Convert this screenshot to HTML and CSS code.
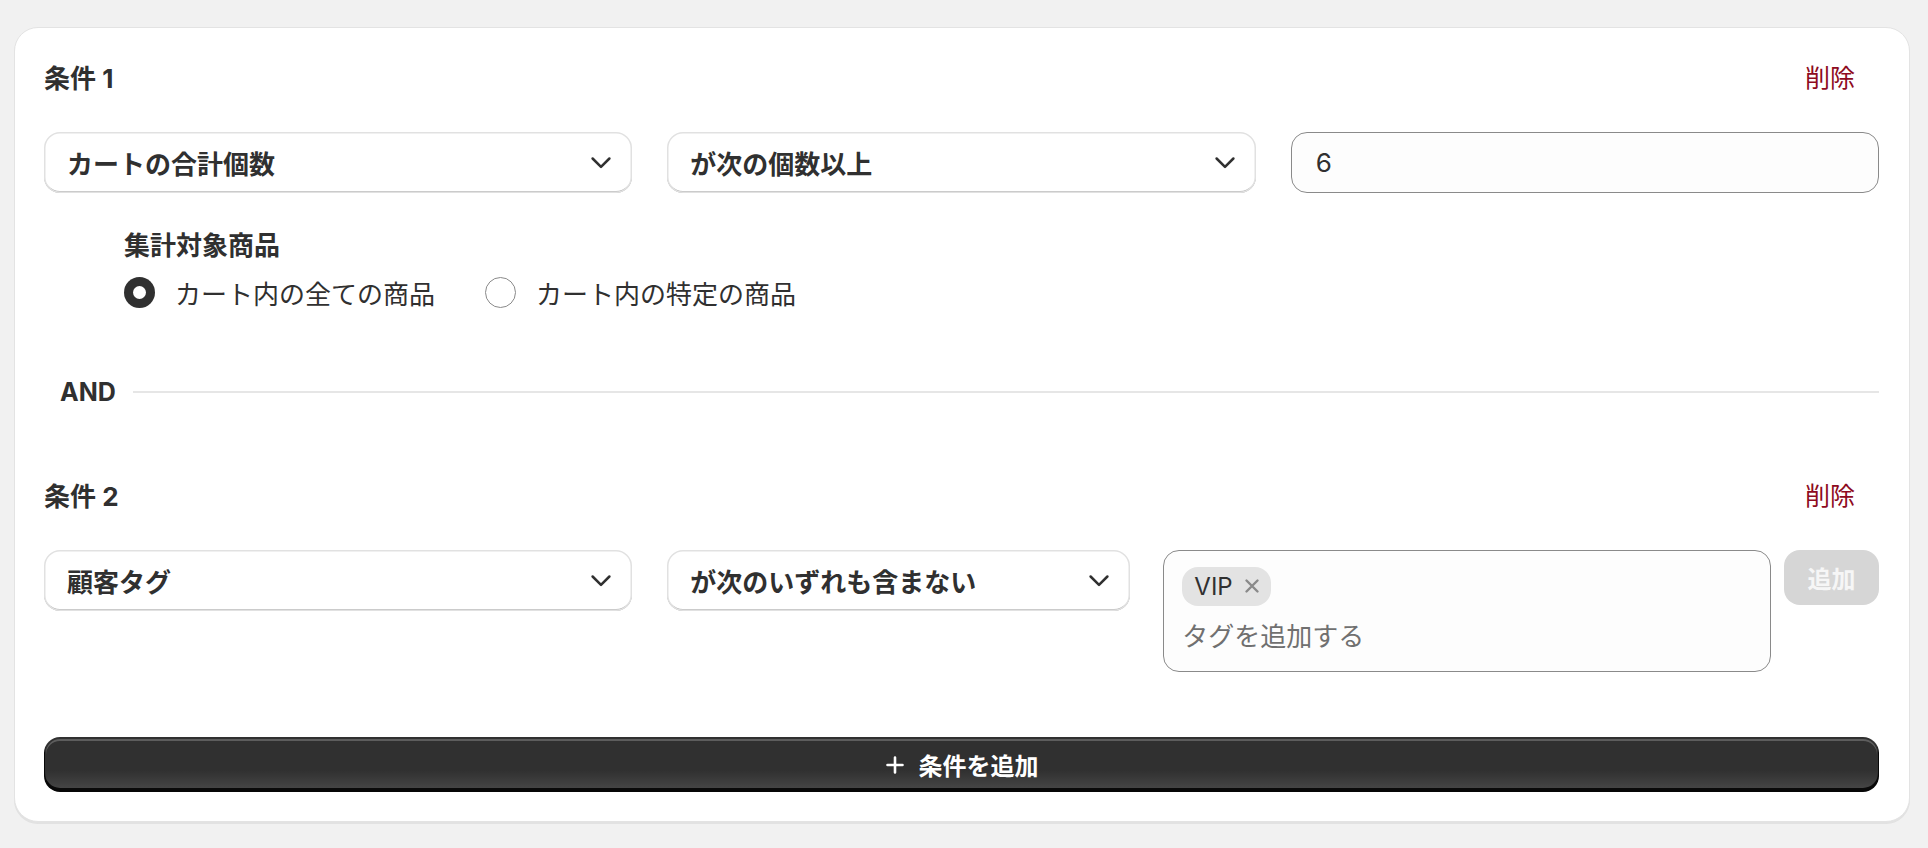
FILE: index.html
```html
<!DOCTYPE html>
<html lang="ja">
<head>
<meta charset="utf-8">
<link rel="stylesheet" href="styles.css">
</head>
<body>
<div class="card">
  <section class="cond">
    <div class="cond-head">
      <h2 class="cond-title">条件 1</h2>
      <span class="delete">削除</span>
    </div>
    <div class="row">
      <div class="select"><span>カートの合計個数</span><svg class="chev" viewBox="0 0 20 20"><path d="M4 7.5l6 6 6-6"/></svg></div>
      <div class="select"><span>が次の個数以上</span><svg class="chev" viewBox="0 0 20 20"><path d="M4 7.5l6 6 6-6"/></svg></div>
      <div class="input"><span>6</span></div>
    </div>
    <div class="scope">
      <div class="scope-title">集計対象商品</div>
      <div class="radios">
        <label class="radio-opt"><span class="radio checked"></span><span>カート内の全ての商品</span></label>
        <label class="radio-opt"><span class="radio"></span><span>カート内の特定の商品</span></label>
      </div>
    </div>
  </section>

  <div class="and-row">
    <span class="and">AND</span>
    <span class="and-line"></span>
  </div>

  <section class="cond">
    <div class="cond-head">
      <h2 class="cond-title">条件 2</h2>
      <span class="delete">削除</span>
    </div>
    <div class="row">
      <div class="select"><span>顧客タグ</span><svg class="chev" viewBox="0 0 20 20"><path d="M4 7.5l6 6 6-6"/></svg></div>
      <div class="row-right">
        <div class="select select-op"><span>が次のいずれも含まない</span><svg class="chev" viewBox="0 0 20 20"><path d="M4 7.5l6 6 6-6"/></svg></div>
        <div class="tagbox">
          <div class="chips"><span class="chip">VIP<svg class="chip-x" viewBox="0 0 20 20"><path d="M5 5l10 10M15 5 5 15"/></svg></span></div>
          <div class="placeholder">タグを追加する</div>
        </div>
        <div class="btn-add">追加</div>
      </div>
    </div>
  </section>

  <div class="btn-primary">
    <svg class="plus" viewBox="0 0 20 20"><path d="M10 2.5v15M2.5 10h15"/></svg>
    <span>条件を追加</span>
  </div>
</div>
</body>
</html>
```

FILE: styles.css
```css
* { box-sizing: border-box; }
html, body { margin: 0; }
body {
  background: #f1f1f1;
  padding: 27px 18px 26px 14px;
  font-family: "Inter", "Noto Sans CJK JP", sans-serif;
  color: #303030;
}
.card {
  background: #fff;
  border: 1px solid #e3e3e3;
  border-radius: 24px;
  box-shadow: 0 2px 0 0 rgba(26,26,26,0.07);
  padding: 29.5px 30px 29px 29px;
}
.cond-head {
  display: flex;
  align-items: center;
  justify-content: space-between;
  height: 40px;
  padding-bottom: 3px;
}
.cond-title {
  margin: 0;
  font-size: 26px;
  font-weight: 700;
}
.delete {
  font-size: 25px;
  color: #8e0b21;
  margin-right: 24px;
}
.row {
  margin-top: 34px;
  display: grid;
  grid-template-columns: repeat(3, 1fr);
  gap: 35px;
  align-items: start;
}
.row-right {
  grid-column: span 2;
  display: flex;
  align-items: flex-start;
}
.select {
  height: 61px;
  border-radius: 16px;
  background: #fff;
  box-shadow: inset 0 0 0 1.5px #e1e1e1, inset 0 -2px 0 0 #b5b5b5;
  display: flex;
  align-items: center;
  justify-content: space-between;
  padding: 0 17px 0 23px;
  font-size: 26px;
  font-weight: 600;
}
.chev {
  width: 28px;
  height: 28px;
  flex: none;
  fill: none;
  stroke: #303030;
  stroke-width: 1.8;
  stroke-linecap: round;
  stroke-linejoin: round;
}
.select-op { width: 463px; flex: none; margin-right: 33px; }
.input {
  height: 61px;
  border: 1px solid #8a8a8a;
  border-radius: 16px;
  background: #fdfdfd;
  display: flex;
  align-items: center;
  padding-left: 24px;
  font-size: 26px;
}
.scope {
  margin: 35px 0 0 80px;
}
.scope-title {
  height: 36px;
  line-height: 36px;
  font-size: 26px;
  font-weight: 700;
}
.radios {
  margin-top: 11px;
  display: flex;
  gap: 50px;
}
.radio-opt {
  display: flex;
  align-items: center;
  gap: 20px;
  height: 36px;
  font-size: 26px;
}
.radio {
  width: 31px;
  height: 31px;
  border-radius: 50%;
  border: 1px solid #8a8a8a;
  background: #fff;
  display: flex;
  align-items: center;
  justify-content: center;
}
.radio.checked {
  border: none;
  background: #303030;
}
.radio.checked::after {
  content: "";
  width: 13px;
  height: 13px;
  border-radius: 50%;
  background: #fff;
}
.and-row {
  margin-top: 63px;
  height: 36px;
  display: flex;
  align-items: center;
  padding-left: 16px;
}
.and {
  font-size: 25px;
  font-weight: 700;
  margin-right: 17px;
}
.and-line {
  flex: 1;
  height: 2px;
  background: #e6e6e6;
}
.and-row + .cond { margin-top: 66px; }
.tagbox {
  flex: 1;
  height: 122px;
  border: 1px solid #8a8a8a;
  border-radius: 16px;
  background: #fdfdfd;
  padding: 16px 18px 14px 18px;
  margin-right: 13px;
}
.chips { display: flex; }
.chip {
  height: 39px;
  display: inline-flex;
  align-items: center;
  background: #e3e3e3;
  border-radius: 16px;
  padding: 0 8px 0 12px;
  font-size: 24px;
}
.chip-x {
  width: 22px;
  height: 22px;
  margin-left: 8px;
  fill: none;
  stroke: #8a8a8a;
  stroke-width: 2.2;
  stroke-linecap: round;
}
.placeholder {
  margin-top: 12px;
  height: 38px;
  line-height: 38px;
  font-size: 26px;
  color: #707070;
}
.btn-add {
  width: 95px;
  flex: none;
  height: 55px;
  border-radius: 16px;
  background: #d6d6d6;
  color: #f6f6f6;
  font-size: 24px;
  font-weight: 600;
  display: flex;
  align-items: center;
  justify-content: center;
}
.btn-primary {
  margin-top: 65.5px;
  height: 55px;
  border-radius: 16px;
  background: linear-gradient(180deg, rgba(48,48,48,0) 60%, rgba(255,255,255,0.12) 100%), #303030;
  box-shadow: inset 0 -3px 0 1px rgba(0,0,0,0.85), inset 0 0 0 2px #303030, inset 0 2px 0 2px rgba(255,255,255,0.22);
  color: #fff;
  display: flex;
  align-items: center;
  justify-content: center;
  gap: 14px;
  font-size: 24px;
  font-weight: 600;
}
.plus {
  width: 20px;
  height: 20px;
  fill: none;
  stroke: #fff;
  stroke-width: 2.6;
  stroke-linecap: round;
}
```
